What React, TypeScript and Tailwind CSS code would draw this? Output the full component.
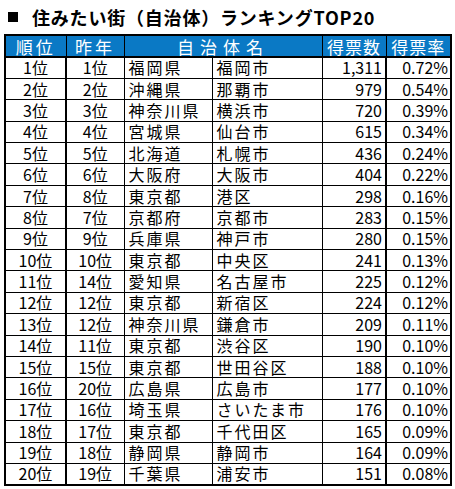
import React from "react";

type Row = [string, string, string, string, string, string];

const rows: Row[] = [
  ["1位", "1位", "福岡県", "福岡市", "1,311", "0.72%"],
  ["2位", "2位", "沖縄県", "那覇市", "979", "0.54%"],
  ["3位", "3位", "神奈川県", "横浜市", "720", "0.39%"],
  ["4位", "4位", "宮城県", "仙台市", "615", "0.34%"],
  ["5位", "5位", "北海道", "札幌市", "436", "0.24%"],
  ["6位", "6位", "大阪府", "大阪市", "404", "0.22%"],
  ["7位", "8位", "東京都", "港区", "298", "0.16%"],
  ["8位", "7位", "京都府", "京都市", "283", "0.15%"],
  ["9位", "9位", "兵庫県", "神戸市", "280", "0.15%"],
  ["10位", "10位", "東京都", "中央区", "241", "0.13%"],
  ["11位", "14位", "愛知県", "名古屋市", "225", "0.12%"],
  ["12位", "12位", "東京都", "新宿区", "224", "0.12%"],
  ["13位", "12位", "神奈川県", "鎌倉市", "209", "0.11%"],
  ["14位", "11位", "東京都", "渋谷区", "190", "0.10%"],
  ["15位", "15位", "東京都", "世田谷区", "188", "0.10%"],
  ["16位", "20位", "広島県", "広島市", "177", "0.10%"],
  ["17位", "16位", "埼玉県", "さいたま市", "176", "0.10%"],
  ["18位", "17位", "東京都", "千代田区", "165", "0.09%"],
  ["19位", "18位", "静岡県", "静岡市", "164", "0.09%"],
  ["20位", "19位", "千葉県", "浦安市", "151", "0.08%"],
];

const font = { fontFamily: "'Noto Sans CJK JP', 'Liberation Sans', sans-serif" };

const App: React.FC = () => {
  return (
    <div className="w-[455px] h-[489px] bg-white" style={font}>
      {/* Title */}
      <div className="flex items-center h-[34px] pl-[8px] pb-[1px] text-[18px] font-bold tracking-[0.8px] text-black leading-[20px]">
        <span className="inline-block w-[10px] h-[10px] bg-black mr-[14px]" />
        住みたい街（自治体）ランキングTOP20
      </div>

      {/* Ranking table */}
      <table className="ml-[4px] border-collapse border-2 border-black table-fixed text-[16px] leading-[19px] text-black">
        <colgroup>
          <col className="w-[61px]" />
          <col className="w-[58px]" />
          <col className="w-[88px]" />
          <col className="w-[110px]" />
          <col className="w-[64px]" />
          <col className="w-[65px]" />
        </colgroup>
        <thead>
          <tr className="h-[22px] bg-[#0a79c5] text-white text-[17px] border-b-2 border-black">
            <th className="p-0 font-normal text-center tracking-[3px] border-r border-black">順位</th>
            <th className="p-0 font-normal text-center tracking-[3px] border-r border-black">昨年</th>
            <th colSpan={2} className="p-0 font-normal text-center tracking-[6px] border-r border-black">自治体名</th>
            <th className="p-0 font-normal text-center tracking-[1px] border-r border-black">得票数</th>
            <th className="p-0 font-normal text-center tracking-[1px]">得票率</th>
          </tr>
        </thead>
        <tbody>
          {rows.map((r, i) => (
            <tr key={i} className="h-[21.4px] border-b border-black">
              <td className="p-0 text-center border-r-2 border-black">{r[0]}</td>
              <td className="p-0 text-center border-r border-black">{r[1]}</td>
              <td className="p-0 text-left pl-[4px] tracking-[2px] border-r border-black whitespace-nowrap">{r[2]}</td>
              <td className="p-0 text-left pl-[4px] tracking-[2px] border-r border-black whitespace-nowrap">{r[3]}</td>
              <td className="p-0 text-right pr-[3px] border-r-2 border-black">{r[4]}</td>
              <td className="p-0 text-right pr-[2px]">{r[5]}</td>
            </tr>
          ))}
        </tbody>
      </table>
    </div>
  );
};

export default App;
